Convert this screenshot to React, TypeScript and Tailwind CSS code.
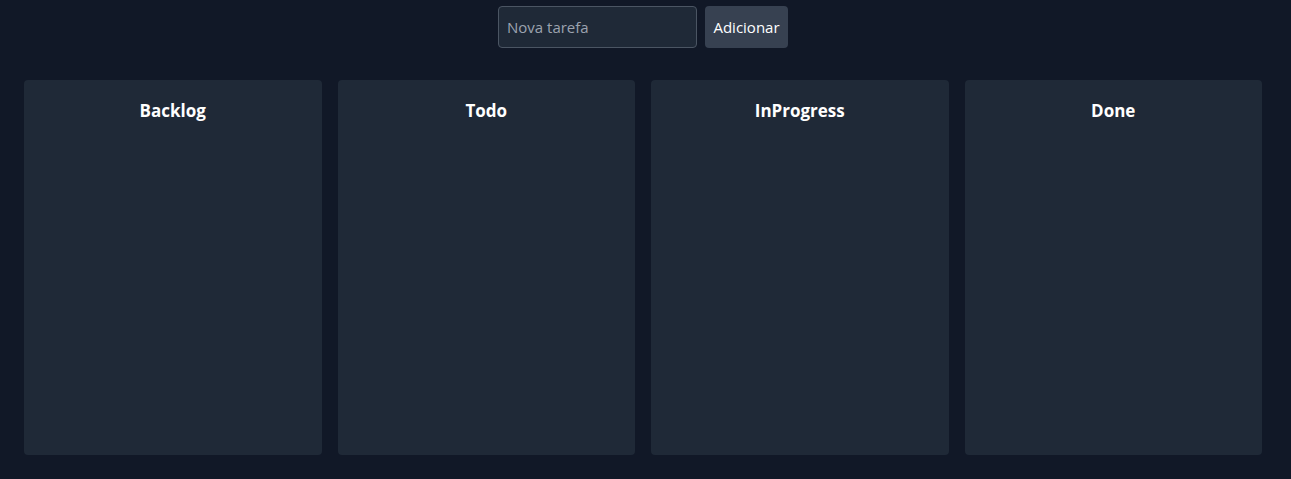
import { useState } from "react";

const columns = ["Backlog", "Todo", "InProgress", "Done"];

export default function App() {
  const [task, setTask] = useState("");

  return (
    <div
      className="min-h-[479px] bg-[#111827] text-white"
      style={{ fontFamily: '"Open Sans", "Noto Sans", sans-serif' }}
    >
      {/* Form */}
      <div className="flex justify-center gap-2 pt-[6px] pr-[5px]">
        <input
          value={task}
          onChange={(e) => setTask(e.target.value)}
          placeholder="Nova tarefa"
          className="h-[42px] w-[199px] rounded border border-[#4b5563] bg-[#1f2937] px-2 text-[15px] text-white placeholder:text-[#9ca3af] outline-none"
        />
        <button className="h-[42px] w-[83px] rounded bg-[#374151] text-[15px] text-white">
          Adicionar
        </button>
      </div>

      {/* Board */}
      <div className="grid grid-cols-4 gap-4 pl-6 pr-[29px] pt-[32px] pb-[25px]">
        {columns.map((col) => (
          <div key={col} className="h-[375px] rounded bg-[#1f2937] pt-[18px]">
            <h2 className="text-center text-[17px] font-bold leading-[26px]">{col}</h2>
          </div>
        ))}
      </div>
    </div>
  );
}
